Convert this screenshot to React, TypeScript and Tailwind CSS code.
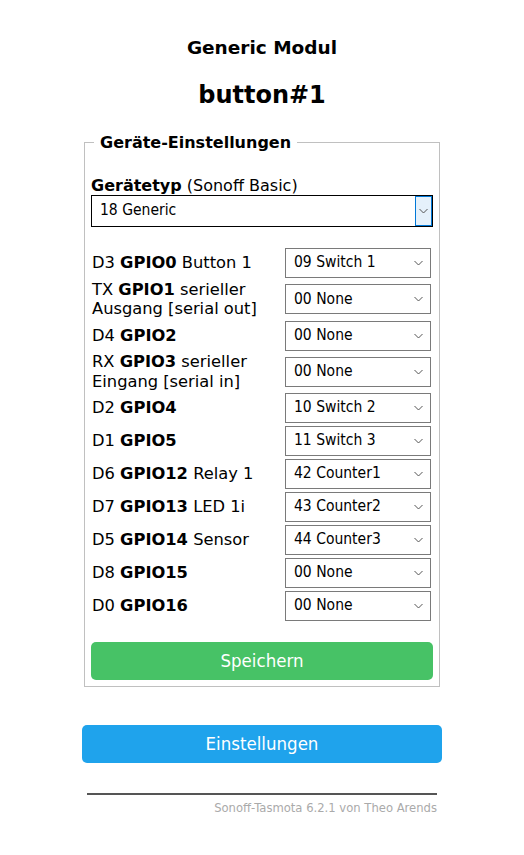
import React from 'react';

const verdana = { fontFamily: '"DejaVu Sans", Verdana, sans-serif' };
const tahoma = { fontFamily: '"DejaVu Sans Condensed", "Liberation Sans", sans-serif' };

const rows: { pin: string; gpio: string; rest: string; value: string }[] = [
  { pin: 'D3', gpio: 'GPIO0', rest: 'Button 1', value: '09 Switch 1' },
  { pin: 'TX', gpio: 'GPIO1', rest: 'serieller Ausgang [serial out]', value: '00 None' },
  { pin: 'D4', gpio: 'GPIO2', rest: '', value: '00 None' },
  { pin: 'RX', gpio: 'GPIO3', rest: 'serieller Eingang [serial in]', value: '00 None' },
  { pin: 'D2', gpio: 'GPIO4', rest: '', value: '10 Switch 2' },
  { pin: 'D1', gpio: 'GPIO5', rest: '', value: '11 Switch 3' },
  { pin: 'D6', gpio: 'GPIO12', rest: 'Relay 1', value: '42 Counter1' },
  { pin: 'D7', gpio: 'GPIO13', rest: 'LED 1i', value: '43 Counter2' },
  { pin: 'D5', gpio: 'GPIO14', rest: 'Sensor', value: '44 Counter3' },
  { pin: 'D8', gpio: 'GPIO15', rest: '', value: '00 None' },
  { pin: 'D0', gpio: 'GPIO16', rest: '', value: '00 None' },
];

function Chevron({ className }: { className?: string }) {
  return (
    <svg className={className} width="9" height="6" viewBox="0 0 9 6" fill="none">
      <path d="M0.5 1 L4.5 5 L8.5 1" stroke="#555" strokeWidth="1" />
    </svg>
  );
}

function FakeSelect({ value }: { value: string }) {
  return (
    <div
      className="flex h-[30px] w-[146px] shrink-0 items-center justify-between border border-[#7a7a7a] bg-white pl-2 pr-[7px] text-[15.5px] text-black"
      style={tahoma}
    >
      <span>{value}</span>
      <Chevron />
    </div>
  );
}

export default function App() {
  return (
    <div className="min-h-[855px] bg-white text-black" style={verdana}>
      <div className="mx-auto w-[360px]">
        <h3 className="pt-[37px] text-center text-[18.5px] font-bold leading-[22px]">Generic Modul</h3>
        <h2 className="mt-[21px] text-center text-[24px] font-bold leading-[30px]">button#1</h2>

        <fieldset className="mx-[2px] mt-[22px] border border-[#c0c0c0] px-[6px] pb-[6px]">
          <legend className="ml-[3px] px-[6px] text-[16px] font-bold leading-[20px]">
            <span className="relative top-[1px]">Geräte-Einstellungen</span>
          </legend>

          <div className="mt-[24px] text-[16px] leading-[20px]">
            <b>Gerätetyp</b> (Sonoff Basic)
          </div>
          <div className="mt-[-1px] flex h-[32px] border border-black text-[15.5px]" style={tahoma}>
            <div className="flex flex-1 items-center pl-[8px]">18 Generic</div>
            <div className="flex w-[17px] items-center justify-center border border-[#0078d7] bg-[#e5f1fb]">
              <Chevron />
            </div>
          </div>

          <div className="mt-[21px] flex flex-col gap-[3px]">
            {rows.map((r) => (
              <div key={r.gpio} className="flex items-center">
                <div className="my-[-1.25px] w-[194px] pl-[1px] pr-2 text-[16.3px] leading-[19.5px]">
                  {r.pin} <b>{r.gpio}</b>
                  {r.rest ? ' ' + r.rest : ''}
                </div>
                <FakeSelect value={r.value} />
              </div>
            ))}
          </div>

          <button
            className="mt-[21px] h-[38px] w-full rounded-[5px] bg-[#47c266] text-[18.5px] text-white"
            style={tahoma}
          >
            Speichern
          </button>
        </fieldset>

        <button
          className="mt-[38px] h-[38px] w-full rounded-[5px] bg-[#1fa3ec] text-[18.5px] text-white"
          style={tahoma}
        >
          Einstellungen
        </button>

        <div className="mx-[5px] mt-[30px] border-t-2 border-[#555]" />
        <div className="mr-[5px] mt-[5px] text-right text-[11.6px] text-[#aaa]">
          Sonoff-Tasmota 6.2.1 von Theo Arends
        </div>
      </div>
    </div>
  );
}
